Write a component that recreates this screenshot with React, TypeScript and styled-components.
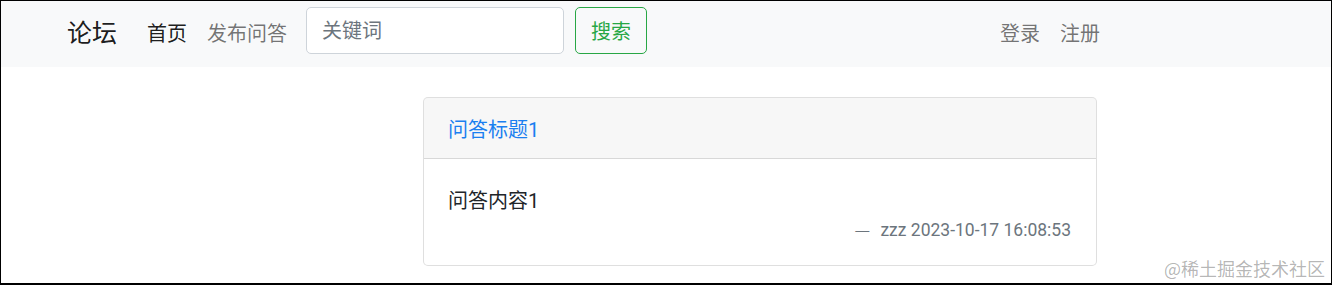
import styled, { createGlobalStyle } from 'styled-components'

const GlobalStyle = createGlobalStyle`
  html, body {
    margin: 0;
    padding: 0;
    background: #fff;
  }
  * {
    box-sizing: border-box;
  }
`

const FONT = `Roboto, "Noto Sans CJK SC", sans-serif`

export default function App() {
  return (
    <>
      <GlobalStyle />
      <Frame>
        <Navbar>
          <NavInner>
            <NavLeft>
              <Brand>论坛</Brand>
              <NavLink $active>首页</NavLink>
              <NavLink>发布问答</NavLink>
              <SearchForm>
                <SearchInput placeholder="关键词" />
                <SearchButton>搜索</SearchButton>
              </SearchForm>
            </NavLeft>
            <NavRight>
              <NavLink>登录</NavLink>
              <NavLink>注册</NavLink>
            </NavRight>
          </NavInner>
        </Navbar>

        <Main>
          <Card>
            <CardHeader>
              <TitleLink>问答标题1</TitleLink>
            </CardHeader>
            <CardBody>
              <Content>问答内容1</Content>
              <Footer>
                <Dash>—</Dash>zzz 2023-10-17 16:08:53
              </Footer>
            </CardBody>
          </Card>
        </Main>

        <Watermark>@稀土掘金技术社区</Watermark>
      </Frame>
    </>
  )
}

// ─── Styles ───────────────────────────────────────

const Frame = styled.div`
  position: relative;
  width: 1332px;
  height: 285px;
  overflow: hidden;
  border: 1px solid #000;
  border-bottom-width: 2px;
  font-family: ${FONT};
  color: #212529;
`

const Navbar = styled.nav`
  height: 66px;
  background: #f8f9fa;
  display: flex;
  align-items: center;
`

const NavInner = styled.div`
  margin-left: 66px;
  width: 1043px;
  display: flex;
  align-items: center;
  justify-content: space-between;
`

const NavLeft = styled.div`
  display: flex;
  align-items: center;
`

const NavRight = styled.div`
  display: flex;
  align-items: center;
`

const Brand = styled.a`
  font-size: 25px;
  line-height: 36px;
  color: rgba(0, 0, 0, 0.9);
  margin-right: 20px;
`

const NavLink = styled.a<{ $active?: boolean }>`
  font-size: 20px;
  line-height: 30px;
  padding: 0 10px;
  color: ${({ $active }) => ($active ? 'rgba(0, 0, 0, 0.9)' : 'rgba(0, 0, 0, 0.55)')};
  cursor: pointer;
`

const SearchForm = styled.form`
  display: flex;
  align-items: center;
  gap: 11px;
  margin-left: 9px;
  margin-bottom: 7px;
`

const SearchInput = styled.input`
  width: 258px;
  height: 47px;
  padding: 7px 15px;
  font-family: ${FONT};
  font-size: 20px;
  color: #495057;
  background: #fff;
  border: 1px solid #ced4da;
  border-radius: 5px;
  outline: none;

  &::placeholder {
    color: #6c757d;
  }
`

const SearchButton = styled.button`
  height: 47px;
  padding: 0 15px;
  font-family: ${FONT};
  font-size: 20px;
  color: #28a745;
  background: transparent;
  border: 1px solid #28a745;
  border-radius: 5px;
  cursor: pointer;
`

const Main = styled.main`
  padding: 30px 0 0 422px;
`

const Card = styled.div`
  width: 674px;
  background: #fff;
  border: 1px solid rgba(0, 0, 0, 0.125);
  border-radius: 5px;
  overflow: hidden;
`

const CardHeader = styled.div`
  padding: 17px 24px 13px;
  background: rgba(0, 0, 0, 0.03);
  border-bottom: 1px solid rgba(0, 0, 0, 0.125);
`

const TitleLink = styled.a`
  font-size: 20px;
  line-height: 30px;
  color: #1a7ff0;
  cursor: pointer;
`

const CardBody = styled.div`
  padding: 27px 25px 23px 24px;
`

const Content = styled.p`
  margin: 0;
  font-size: 20px;
  line-height: 30px;
  color: #212529;
`

const Footer = styled.div`
  margin-top: 1px;
  text-align: right;
  font-size: 17.5px;
  line-height: 24px;
  color: #6c757d;
`

const Dash = styled.span`
  display: inline-block;
  width: 26px;
  text-align: left;
  font-family: "Noto Sans CJK SC", sans-serif;
`

const Watermark = styled.div`
  position: absolute;
  right: 6px;
  bottom: 2px;
  font-size: 18px;
  line-height: 26px;
  color: rgba(0, 0, 0, 0.3);
  font-family: "Noto Sans CJK SC", sans-serif;
`
